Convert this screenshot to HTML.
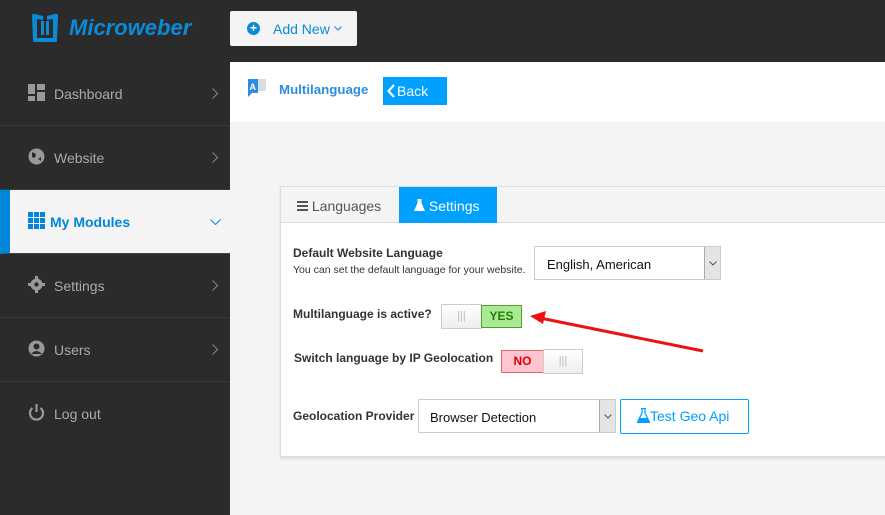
<!DOCTYPE html>
<html><head><meta charset="utf-8"><style>
*{box-sizing:border-box;margin:0;padding:0}
body{width:885px;height:515px;overflow:hidden;background:#f4f4f4;font-family:"Liberation Sans",Arial,sans-serif;position:relative}
.top{position:absolute;left:0;top:0;width:885px;height:62px;background:#2b2b2b}
.side{position:absolute;left:0;top:62px;width:230px;height:453px;background:#2b2b2b}
.item{position:absolute;left:0;width:230px;height:64px;border-bottom:1px solid #3a3a3a;color:#aaa;font-size:14px}
.item .ic{position:absolute;left:28px;top:22px;width:17px;height:17px}
.item .t{position:absolute;left:54px;top:24px}
.item .ch{position:absolute;left:212px;top:26px;width:6px;height:11px}
.act{background:#f4f4f4;border-left:10px solid #0086db;color:#0086db;font-weight:bold}
.main{position:absolute;left:230px;top:62px;width:655px;height:60px;background:#fff}
.panel{position:absolute;left:280px;top:186px;width:620px;height:271px;background:#fff;border:1px solid #ddd;box-shadow:0 2px 2px #ddd}
.tabs{height:36px;background:#f4f4f4;border-bottom:1px solid #ddd;position:relative}
.lbl{position:absolute;font-size:12px;font-weight:bold;color:#333}
.sel{position:absolute;border:1px solid #ccc;background:#fff;font-size:13px;color:#111}
.sel .ar{position:absolute;right:0;top:0;bottom:0;width:16px;background:#e4e4e4;border-left:1px solid #aaa}
</style></head><body>
<div class="top">
 <svg style="position:absolute;left:29px;top:12px" width="32" height="32" viewBox="0 0 32 32"><path d="M3 4 Q3 1 6 2 L14 4 L14 8 L8 7 L8 26 L24 26 L24 7 L18 8 L18 4 L26 2 Q29 1 29 4 L28 28 Q28 31 25 30 L6 30 Q4 30 4 28Z" fill="#0a8bd8"/><rect x="12" y="9" width="3" height="14" fill="#0a8bd8"/><rect x="17" y="9" width="3" height="14" fill="#0a8bd8"/></svg>
 <div style="position:absolute;left:69px;top:15px;color:#0a8bd8;font-size:22px;font-weight:bold;font-style:italic">Microweber</div>
 <div style="position:absolute;left:230px;top:11px;width:127px;height:35px;background:#f4f4f4;border-radius:2px">
  <div style="position:absolute;left:17px;top:11px;width:13px;height:13px;border-radius:50%;background:#0a8bd8;color:#fff;font-size:12px;line-height:13px;text-align:center;font-weight:bold">+</div>
  <div style="position:absolute;left:43px;top:10px;color:#0a8bd8;font-size:14px">Add New</div>
  <svg style="position:absolute;left:104px;top:15px" width="8" height="5" viewBox="0 0 8 5"><path d="M0.5 0.5 L4 4 L7.5 0.5" stroke="#0a8bd8" fill="none"/></svg>
 </div>
</div>
<div class="side">
 <div class="item" style="top:0"><svg class="ic" viewBox="0 0 17 17"><rect x="0" y="0" width="7" height="10" fill="#999"/><rect x="9" y="0" width="8" height="6" fill="#999"/><rect x="0" y="12" width="7" height="5" fill="#999"/><rect x="9" y="8" width="8" height="9" fill="#999"/></svg><span class="t">Dashboard</span><svg class="ch" viewBox="0 0 6 11"><path d="M0.5 0.5 L5.5 5.5 L0.5 10.5" stroke="#888" fill="none"/></svg></div>
 <div class="item" style="top:64px"><svg class="ic" viewBox="0 0 17 17"><circle cx="8.5" cy="8.5" r="8" fill="#999"/><path d="M4 4 L8 6 L7 10 L4 9Z M10 11 L13 9 L13 13Z" fill="#2b2b2b"/></svg><span class="t">Website</span><svg class="ch" viewBox="0 0 6 11"><path d="M0.5 0.5 L5.5 5.5 L0.5 10.5" stroke="#888" fill="none"/></svg></div>
 <div class="item act" style="top:128px;border-bottom:1px solid #444"><svg class="ic" style="left:18px" viewBox="0 0 17 17" fill="#0086db"><rect x="0" y="0" width="5" height="5"/><rect x="6" y="0" width="5" height="5"/><rect x="12" y="0" width="5" height="5"/><rect x="0" y="6" width="5" height="5"/><rect x="6" y="6" width="5" height="5"/><rect x="12" y="6" width="5" height="5"/><rect x="0" y="12" width="5" height="5"/><rect x="6" y="12" width="5" height="5"/><rect x="12" y="12" width="5" height="5"/></svg><span class="t" style="left:40px">My Modules</span><svg style="position:absolute;left:200px;top:29px" width="11" height="6" viewBox="0 0 11 6"><path d="M0.5 0.5 L5.5 5.5 L10.5 0.5" stroke="#0086db" fill="none"/></svg></div>
 <div class="item" style="top:192px"><svg class="ic" viewBox="0 0 17 17"><circle cx="8.5" cy="8.5" r="6" fill="#999"/><rect x="7" y="0" width="3" height="17" fill="#999"/><rect x="0" y="7" width="17" height="3" fill="#999"/><circle cx="8.5" cy="8.5" r="2.2" fill="#2b2b2b"/></svg><span class="t">Settings</span><svg class="ch" viewBox="0 0 6 11"><path d="M0.5 0.5 L5.5 5.5 L0.5 10.5" stroke="#888" fill="none"/></svg></div>
 <div class="item" style="top:256px"><svg class="ic" viewBox="0 0 17 17"><circle cx="8.5" cy="8.5" r="8" fill="#999"/><circle cx="8.5" cy="6.5" r="3" fill="#2b2b2b"/><path d="M3 14 Q8.5 8 14 14Z" fill="#2b2b2b"/></svg><span class="t">Users</span><svg class="ch" viewBox="0 0 6 11"><path d="M0.5 0.5 L5.5 5.5 L0.5 10.5" stroke="#888" fill="none"/></svg></div>
 <div class="item" style="top:320px;border:none"><svg class="ic" viewBox="0 0 17 17"><path d="M4.5 4 A6.5 6.5 0 1 0 12.5 4" stroke="#999" stroke-width="2.2" fill="none"/><rect x="7.4" y="0" width="2.2" height="8" fill="#999"/></svg><span class="t">Log out</span></div>
</div>
<div class="main">
 <svg style="position:absolute;left:18px;top:17px" width="18" height="18" viewBox="0 0 18 18"><rect x="0" y="0" width="10" height="14" fill="#2d8ee0"/><path d="M0 14 L0 18 L4 14Z" fill="#2d8ee0"/><rect x="10" y="0" width="8" height="12" fill="#d8dde3"/><text x="1.5" y="11" font-size="9" font-weight="bold" fill="#fff" font-family="Liberation Sans">A</text></svg>
 <div style="position:absolute;left:49px;top:20px;color:#2d8ee0;font-size:13.3px;font-weight:bold">Multilanguage</div>
 <div style="position:absolute;left:153px;top:15px;width:64px;height:28px;background:#00a0ff;color:#fff;font-size:14px;line-height:28px;padding-left:14px"><svg style="position:absolute;left:4px;top:7px" width="8" height="14" viewBox="0 0 8 14"><path d="M7 1 L1.5 7 L7 13" stroke="#fff" stroke-width="2.2" fill="none"/></svg>Back</div>
</div>
<div class="panel">
 <div class="tabs">
  <div style="position:absolute;left:16px;top:11px;color:#555;font-size:14px"><svg width="11" height="10" viewBox="0 0 11 10" style="vertical-align:0"><rect y="0" width="11" height="2" fill="#555"/><rect y="4" width="11" height="2" fill="#555"/><rect y="8" width="11" height="2" fill="#555"/></svg> Languages</div>
  <div style="position:absolute;left:118px;top:0;width:98px;height:36px;background:#00a0ff;color:#fff;font-size:14px;padding:11px 0 0 15px"><svg width="11" height="12" viewBox="0 0 11 12"><path d="M3.5 0 H7.5 V4 L11 12 H0 L3.5 4Z" fill="#fff"/></svg> Settings</div>
 </div>
 <div class="lbl" style="left:12px;top:59px">Default Website Language</div>
 <div style="position:absolute;left:12px;top:77px;font-size:10.5px;color:#333">You can set the default language for your website.</div>
 <div class="sel" style="left:253px;top:59px;width:187px;height:34px"><span style="position:absolute;left:12px;top:10px">English, American</span><div class="ar"><svg style="position:absolute;left:4px;top:14px" width="8" height="5" viewBox="0 0 8 5"><path d="M0.5 0.5 L4 4 L7.5 0.5" stroke="#555" fill="none"/></svg></div></div>
 <div class="lbl" style="left:12px;top:120px">Multilanguage is active?</div>
 <div style="position:absolute;left:160px;top:117px;width:82px;height:25px">
  <div style="position:absolute;left:0;top:0;width:41px;height:25px;background:linear-gradient(#fff,#eee);border:1px solid #ccc;color:#bbb;font-size:11px;text-align:center;line-height:23px">|||</div>
  <div style="position:absolute;left:40px;top:1px;width:41px;height:23px;background:#a7ec92;border:1px solid #5c9a34;color:#2b7a0e;font-size:12px;font-weight:bold;text-align:center;line-height:21px">YES</div>
 </div>
 <svg style="position:absolute;left:245px;top:120px" width="180" height="50" viewBox="0 0 180 50"><line x1="177" y1="44" x2="14" y2="11" stroke="#ee1111" stroke-width="3"/><path d="M4 9 L20 4 L17 17Z" fill="#ee1111"/></svg>
 <div class="lbl" style="left:13px;top:164px">Switch language by IP Geolocation</div>
 <div style="position:absolute;left:220px;top:162px;width:82px;height:25px">
  <div style="position:absolute;left:0;top:1px;width:43px;height:23px;background:#ffc4cf;border:1px solid #e06666;color:#d00;font-size:12px;font-weight:bold;text-align:center;line-height:21px">NO</div>
  <div style="position:absolute;left:42px;top:0;width:40px;height:25px;background:linear-gradient(#fff,#eee);border:1px solid #ccc;color:#bbb;font-size:11px;text-align:center;line-height:23px">|||</div>
 </div>
 <div class="lbl" style="left:12px;top:222px">Geolocation Provider</div>
 <div class="sel" style="left:137px;top:212px;width:198px;height:34px"><span style="position:absolute;left:11px;top:10px">Browser Detection</span><div class="ar"><svg style="position:absolute;left:4px;top:14px" width="8" height="5" viewBox="0 0 8 5"><path d="M0.5 0.5 L4 4 L7.5 0.5" stroke="#555" fill="none"/></svg></div></div>
 <div style="position:absolute;left:339px;top:212px;width:129px;height:35px;border:1px solid #00a0ff;border-radius:2px;color:#00a0ff;font-size:14px;line-height:33px;padding-left:16px"><svg width="13" height="15" viewBox="0 0 13 15" style="vertical-align:-2px"><path d="M4 0.5 H9 M5 0.5 V5 L0.5 14.5 H12.5 L8 5 V0.5" stroke="#00a0ff" stroke-width="1.3" fill="none"/><path d="M2.5 10 H10.5 L12.5 14.5 H0.5Z" fill="#00a0ff"/></svg>Test Geo Api</div>
</div>
</body></html>
